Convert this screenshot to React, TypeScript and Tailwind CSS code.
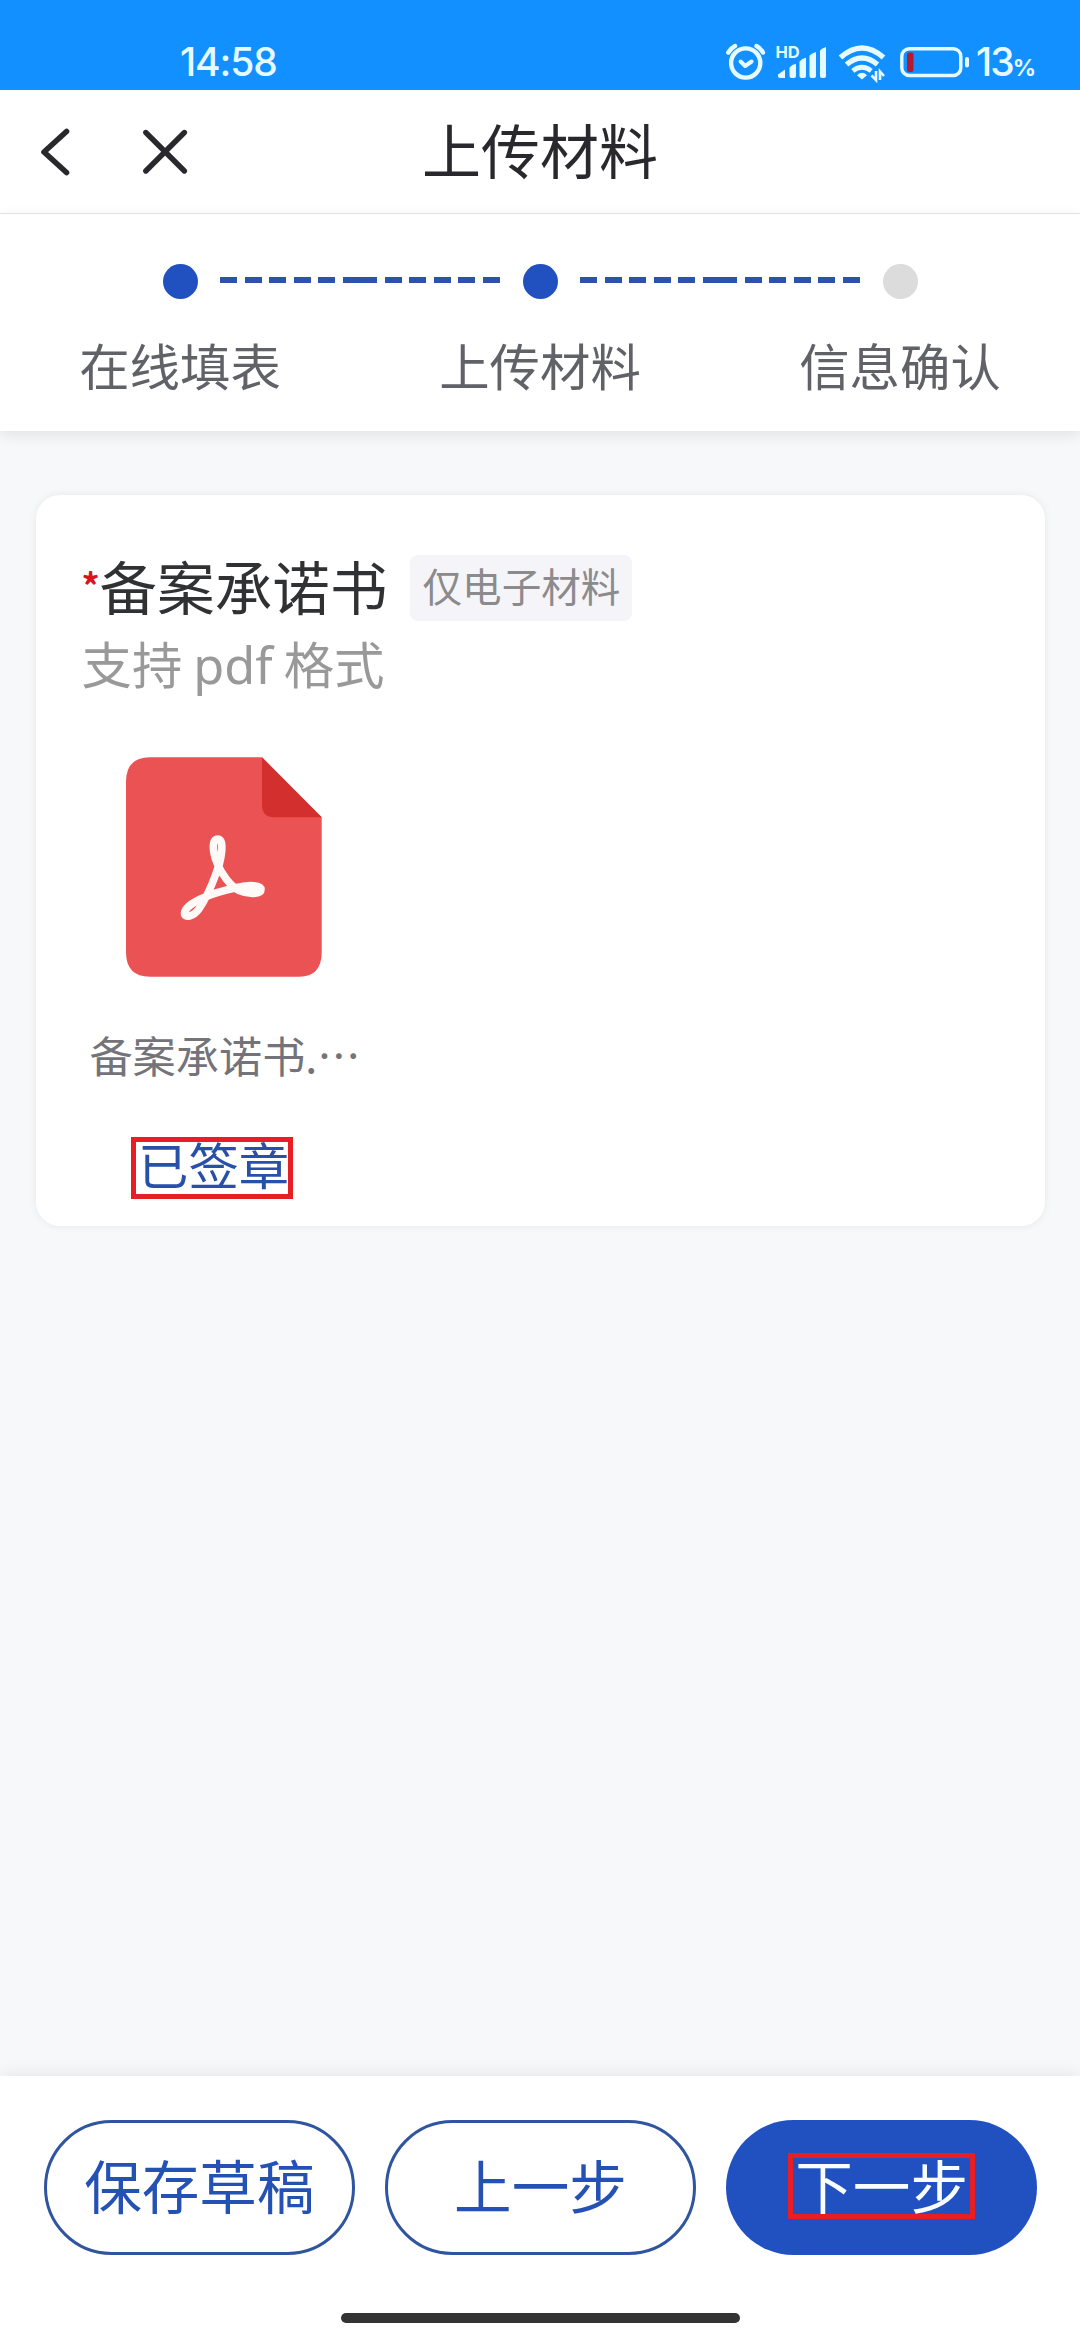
import React from "react";

const CJK = "font-['Noto_Sans_CJK_SC',sans-serif]";

function StatusBar() {
  return (
    <div className="flex h-[90px] shrink-0 items-start bg-[#1290ff] font-['Inter',sans-serif] text-[#e6fbff]">
      <div className="ml-[180px] mt-[38px] w-[300px] text-[39px] leading-[48px] font-medium tracking-[-1.1px]">
        14:58
      </div>
      <div className="ml-[240px] mt-[40px] flex h-[44px] items-start">
        <svg className="ml-[4px]" width="44" height="44" viewBox="724 40 44 44" fill="none" stroke="#e6fbff" strokeLinecap="round">
          <circle cx="745.7" cy="63" r="14.6" strokeWidth="4.4" />
          <path d="M728.3 52.5 Q731 48 735 46 M756.5 46 Q760.5 48 763 52.5" strokeWidth="4.4" />
          <path d="M740.6 61.5 L745.2 66 L751.6 61.5" strokeWidth="4" strokeLinejoin="round" />
        </svg>
        <svg className="ml-[4px]" width="60" height="44" viewBox="772 40 60 44" fill="#e6fbff">
          <text x="775.6" y="58" fontSize="16.5" fontWeight="700" fontFamily="Inter, sans-serif" textLength="24">HD</text>
          <path d="M778 74.5 L785 69.5 V78 H780 Q778 78 778 76Z" />
          <path d="M789.5 67.5 Q792 64.5 796 63.8 V76 Q796 78 794 78 H791.5 Q789.5 78 789.5 76Z" />
          <path d="M799.5 61.5 Q802 58.5 806 57.8 V76 Q806 78 804 78 H801.5 Q799.5 78 799.5 76Z" />
          <path d="M809.5 55.5 Q812 53 816 52 V76 Q816 78 814 78 H811.5 Q809.5 78 809.5 76Z" />
          <path d="M820 50.5 Q822 48 826 47 V76 Q826 78 824 78 H822 Q820 78 820 76Z" />
        </svg>
        <svg className="ml-[4px]" width="52" height="44" viewBox="836 40 52 44" fill="none" stroke="#e6fbff">
          <path d="M840.5 57.5 Q862 38.5 883.5 57.5" strokeWidth="5.4" />
          <path d="M846.5 64.5 Q862 51.5 877.5 64.5" strokeWidth="5.4" />
          <path d="M852.8 70.8 Q862 63.8 871.2 70.8" strokeWidth="4.8" />
          <path d="M857 75.2 Q862 70.5 867 75.2 L862 79.5Z" fill="#e6fbff" stroke="none" />
          <path d="M876 71 V80 L871.5 75.5 M880 80 V71.5 L884 76" strokeWidth="2.6" />
        </svg>
        <svg className="ml-[10px]" width="74" height="44" viewBox="898 40 74 44" fill="none">
          <rect x="901.8" y="48.7" width="59" height="26.8" rx="7.5" stroke="#e6fbff" strokeWidth="3.4" />
          <rect x="907" y="52.5" width="6.5" height="19.5" rx="2" fill="#b51a2e" />
          <rect x="965" y="57" width="4" height="10.5" rx="2" fill="#e6fbff" />
        </svg>
      </div>
      <div className="ml-[4px] mt-[38px] text-[39px] leading-[48px] font-medium tracking-[-2px] whitespace-nowrap">
        13<span className="text-[23px] font-bold">%</span>
      </div>
    </div>
  );
}

function NavBar() {
  return (
    <div className="grid h-[124px] shrink-0 grid-cols-[1fr_auto_1fr] items-center border-b border-[#e5e6e8] bg-white text-[#28282d]">
      <div className="flex items-center pl-[38px]">
        <svg width="34" height="54" viewBox="38 125 34 54" fill="none" stroke="currentColor" strokeWidth="5.6" strokeLinecap="round" strokeLinejoin="round">
          <path d="M66.5 131.5 L44 152 L66.5 172.5" />
        </svg>
        <svg className="ml-[68px]" width="50" height="54" viewBox="140 125 50 54" fill="none" stroke="currentColor" strokeWidth="5.4" strokeLinecap="round">
          <path d="M145.8 132.5 L184.4 171 M184.4 132.5 L145.8 171" />
        </svg>
      </div>
      <h1 className="pb-[6px] text-[59px] leading-[80px] font-normal">上传材料</h1>
      <div />
    </div>
  );
}

function Dashes() {
  return (
    <div className="flex h-[6px] flex-1">
      {[0, 1].map((half) => (
        <div key={half} className="flex flex-1 justify-between">
          {[0, 1, 2, 3, 4, 5].map((i) => (
            <span key={i} className="w-[16.9px] bg-[#2b53ab]" />
          ))}
        </div>
      ))}
    </div>
  );
}

function Steps() {
  return (
    <div className="z-10 h-[217px] shrink-0 bg-white pt-[50px] shadow-[0_4px_14px_rgba(0,0,0,0.09)]">
      <div className="flex h-[35px] items-center px-[162.5px]">
        <span className="size-[35px] rounded-full bg-[#2151c1]" />
        <div className="flex flex-1 px-[22.5px] pb-[3px]"><Dashes /></div>
        <span className="size-[35px] rounded-full bg-[#2151c1]" />
        <div className="flex flex-1 px-[22.5px] pb-[3px]"><Dashes /></div>
        <span className="size-[35px] rounded-full bg-[#dcdcdc]" />
      </div>
      <div className="mt-[30px] grid grid-cols-3 text-center text-[50.4px] leading-[72px] text-[#606268]">
        <span>在线填表</span>
        <span>上传材料</span>
        <span>信息确认</span>
      </div>
    </div>
  );
}

function PdfIcon() {
  return (
    <svg width="196" height="220" viewBox="126 757 196 220" fill="none">
      <path d="M148 757.3 H262 L321.7 817.3 V952 Q321.7 976.7 299 976.7 H150 Q126 976.7 126 952 V782 Q126 757.3 150 757.3Z" fill="#eb5253" />
      <path d="M262 757.3 L321.7 817.3 H274 Q262 817.3 262 805Z" fill="#d32f2f" />
      <path
        d="M218 839 C211.500 839 212.500 852 217 863 C221.500 874 230 886 239 890.500 C248 894.500 261 894.500 261 889.500 C261 884.500 248 885 237 887.500 C226 890 214 893 205 897 C194 901.500 184.500 908 184.500 913.500 C184.500 918 193 917 199 909 C205 900 211.500 886 215.500 875 C221.500 861 225 839 218 839Z"
        stroke="#fffaf8"
        strokeWidth="7.6"
        strokeLinejoin="round"
      />
    </svg>
  );
}

function MaterialCard() {
  return (
    <section className="mx-[35.5px] mt-[63.5px] flex h-[731.5px] flex-col rounded-[24px] bg-white pl-[46px] shadow-[0_0_8px_rgba(0,0,0,0.07)]">
      <div className="mt-[60px] flex h-[66px] items-center">
        <span className="w-[18px] pb-[7px] text-[36px] leading-[60px] font-bold text-[#d9141c]">*</span>
        <h2 className="pb-[6px] text-[57.6px] leading-[66px] font-normal text-[#303133]">备案承诺书</h2>
        <span className="ml-[23px] flex h-[66px] w-[222px] items-center justify-center rounded-[8px] bg-[#f5f5f9] pb-[5px] text-[39.6px] leading-[60px] text-[#8b8b8e]">
          仅电子材料
        </span>
      </div>
      <p className="mt-[6px] h-[72px] text-[50.4px] leading-[72px] text-[#999999]">
        支持<span className="mx-[11px] font-['Noto_Sans',sans-serif] leading-[50px]">pdf</span>格式
      </p>
      <div className="mt-[58px] flex w-[285px] flex-col items-center">
        <PdfIcon />
        <p className="mt-[46px] ml-[2px] text-[43.2px] leading-[62px] whitespace-nowrap text-[#737379]" lang="zh-CN">备案承诺书.…</p>
        <div className="mt-[52.5px] ml-[-24px] flex h-[62px] w-[162px] items-center border-[5px] border-[#e81e25] pb-[8px] pl-[2px] text-[50.4px] leading-[50px] whitespace-nowrap text-[#2850aa]">
          已签章
        </div>
      </div>
    </section>
  );
}

function Footer() {
  const button = "flex h-[135px] items-center justify-center rounded-full pb-[6px] text-[57.6px] leading-[80px]";
  return (
    <footer className="flex h-[264.5px] shrink-0 flex-col bg-white shadow-[0_-4px_14px_rgba(0,0,0,0.06)]">
      <div className="mt-[44px] grid grid-cols-3 gap-[30.5px] pr-[43px] pl-[44px]">
        <button className={button + " border-[3px] border-[#3055a0] text-[#2451b4]"}>保存草稿</button>
        <button className={button + " border-[3px] border-[#3055a0] text-[#2451b4]"}>上一步</button>
        <button className="flex h-[135px] items-center justify-center rounded-full bg-[#2151c1] text-[57.6px] leading-[80px] text-[#f8fdff]">
          <span className="mb-[2px] flex h-[66px] w-[187px] items-center justify-center border-[5px] border-[#e81e25] pb-[5px] whitespace-nowrap">下一步</span>
        </button>
      </div>
      <div className="mx-auto mt-[58.500px] h-[10px] w-[399px] rounded-full bg-[#333333]" />
    </footer>
  );
}

export default function App() {
  return (
    <div className={"flex h-[2340px] w-[1080px] flex-col overflow-hidden bg-[#f7f8fa] " + CJK}>
      <StatusBar />
      <NavBar />
      <Steps />
      <main className="flex-1">
        <MaterialCard />
      </main>
      <Footer />
    </div>
  );
}
